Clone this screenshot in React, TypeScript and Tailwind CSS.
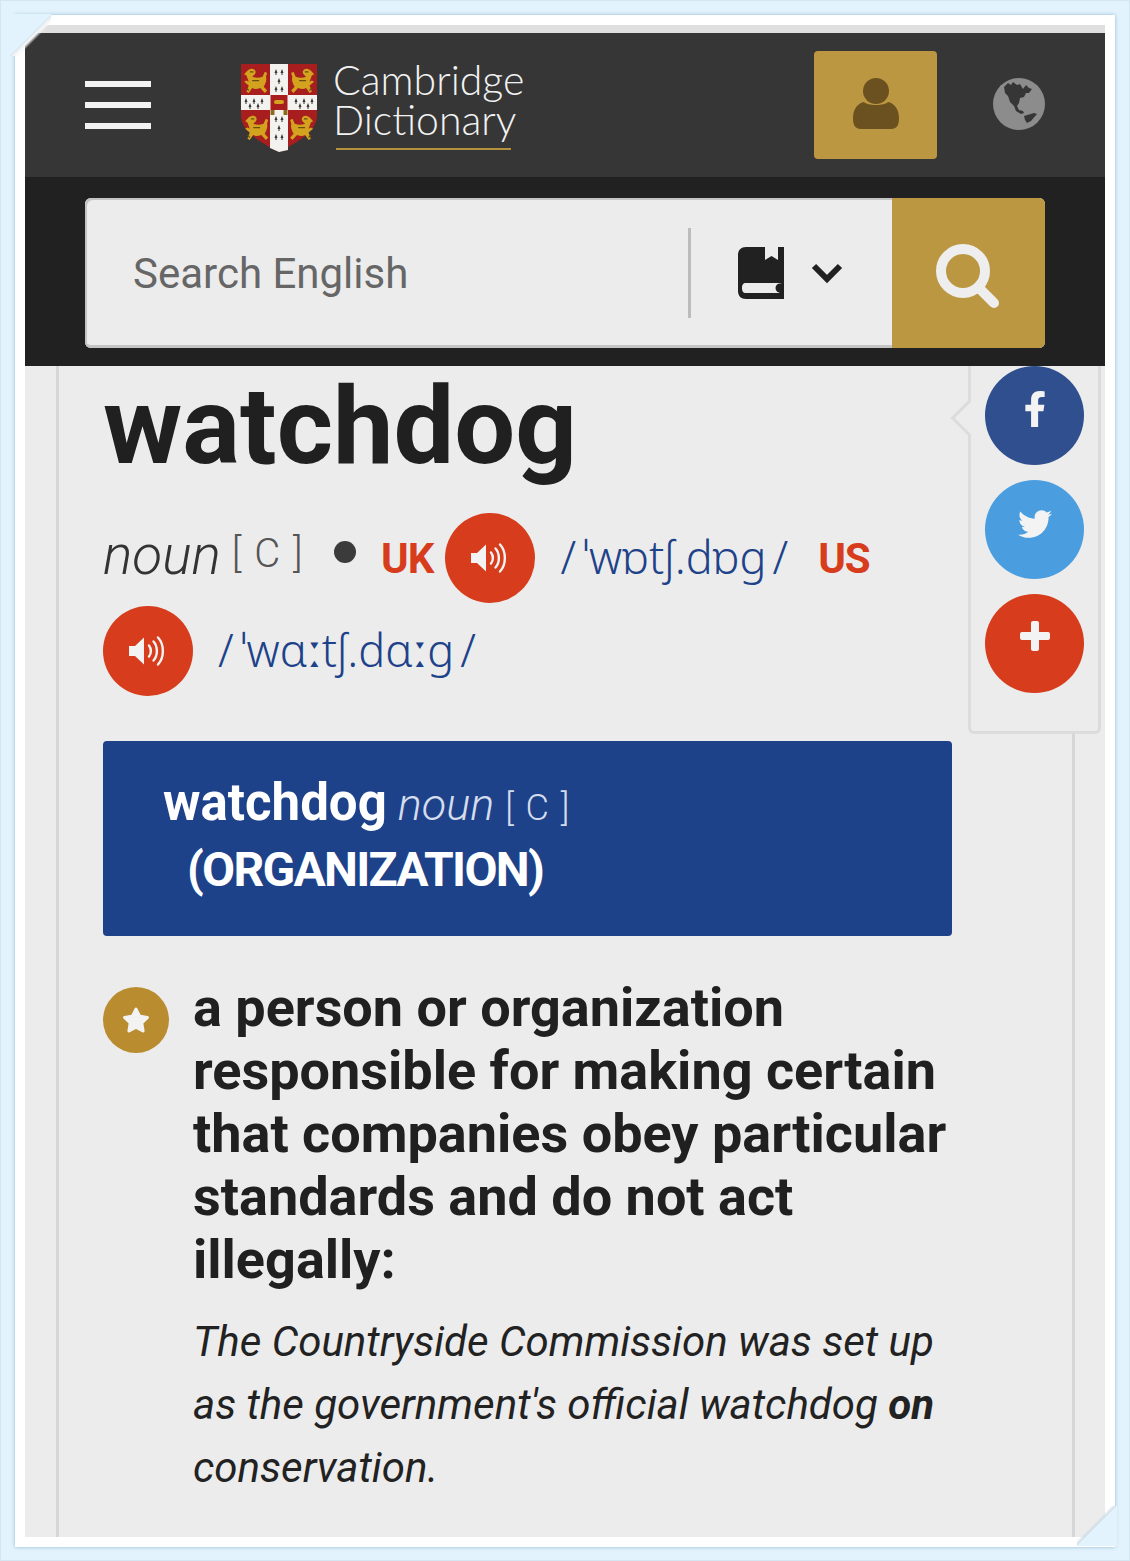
import { FaFacebookF, FaTwitter, FaStar } from "react-icons/fa";

const roboto = "font-['Roboto',sans-serif]";

function Speaker() {
  return (
    <svg width="38" height="32" viewBox="0 0 38 32" fill="none">
      <path d="M0 11h6L15 2.5v27L6 21H0z" fill="#f3f3f3" />
      <path d="M20 10.5c2.5 3 2.5 8 0 11" stroke="#f3f3f3" strokeWidth="2.4" strokeLinecap="round" />
      <path d="M24.5 6.5c4.5 5 4.5 14 0 19" stroke="#f3f3f3" strokeWidth="2.4" strokeLinecap="round" />
      <path d="M29 2.5c6.5 7 6.5 20 0 27" stroke="#f3f3f3" strokeWidth="2.4" strokeLinecap="round" />
    </svg>
  );
}

function SoundButton() {
  return (
    <span className="flex h-[90px] w-[90px] shrink-0 items-center justify-center rounded-full bg-[#d73d1c]">
      <Speaker />
    </span>
  );
}

function Lion({ flip, x, y }: { flip?: boolean; x: number; y: number }) {
  return (
    <g transform={`translate(${x} ${y}) ${flip ? "scale(-1.15 1.25) translate(-22 0)" : "scale(1.15 1.25)"}`}>
      <path
        d="M4 2c3-2 6-2 7 1 0 2-2 3-3 4 3 1 6 1 9 0l2-4 2 1-1 3c1 3-1 6-2 8l3 3-2 2-4-4c-3 1-5 1-7 0l-3 4-2-1 2-5-4-3 2-1 2 1-2-5-2-1z"
        fill="#d3a21f"
      />
      <path d="M6 3h3M8 10h6M3 16l2 2" stroke="#6b4d10" strokeWidth="1" />
    </g>
  );
}

function Ermine({ x, y }: { x: number; y: number }) {
  return <path d={`M${x} ${y}l1.5 4h-3zM${x - 0.5} ${y + 4}h1v2h-1z`} fill="#333" />;
}

function Shield() {
  return (
    <svg width="76" height="88" viewBox="0 0 76 88" className="shrink-0">
      <path d="M0 0H76V52C76 68 55 79 38 88 21 79 0 68 0 52Z" fill="#a81e1e" />
      <path d="M29 0H47V31H76V46H47V86L38 88 29 84V46H0V31H29Z" fill="#f4f2ee" />
      <Lion x={2} y={4} />
      <Lion x={49} y={4} flip />
      <Lion x={3} y={51} />
      <Lion x={48} y={51} flip />
      <Ermine x={35} y={5} />
      <Ermine x={41} y={5} />
      <Ermine x={38} y={14} />
      <Ermine x={35} y={22} />
      <Ermine x={41} y={22} />
      <Ermine x={35} y={52} />
      <Ermine x={41} y={52} />
      <Ermine x={38} y={61} />
      <Ermine x={35} y={70} />
      <Ermine x={41} y={70} />
      <Ermine x={5} y={34} />
      <Ermine x={13} y={34} />
      <Ermine x={21} y={34} />
      <Ermine x={9} y={39} />
      <Ermine x={17} y={39} />
      <Ermine x={55} y={34} />
      <Ermine x={63} y={34} />
      <Ermine x={71} y={34} />
      <Ermine x={59} y={39} />
      <Ermine x={67} y={39} />
      <rect x="29.5" y="31" width="17" height="15" fill="#a81e1e" />
      <rect x="33" y="36" width="10" height="4" rx="2" fill="#d3a21f" />
      <rect x="29.5" y="46" width="4" height="5" fill="#8a6a1f" />
      <rect x="42.5" y="46" width="4" height="5" fill="#8a6a1f" />
    </svg>
  );
}

function Globe() {
  return (
    <svg width="52" height="52" viewBox="0 0 52 52" className="shrink-0">
      <circle cx="26" cy="26" r="26" fill="#8c8c8c" />
      <path
        d="M11 9l4-4 3 2 2-3 4 3 3-1 3 5 3-4 3 3 3 1-3 4-3 0-2 4-4 1-1 5-2 3 2 4 4 1 1 2-3 1-5-3-2-5-4-4-2-6-3-3z"
        fill="#363636"
      />
      <path d="M31 38l10-3 3 1-6 7-4 2-2-3z" fill="#363636" />
    </svg>
  );
}

function Person() {
  return (
    <svg width="48" height="52" viewBox="0 0 48 52">
      <circle cx="24" cy="13" r="13" fill="#6b5120" />
      <path
        d="M12 24c3 4 21 4 24 0 6 1 11 7 11 16 0 7-2 11-8 11H9c-6 0-8-4-8-11 0-9 5-15 11-16z"
        fill="#6b5120"
      />
    </svg>
  );
}

function Book() {
  return (
    <svg width="46" height="52" viewBox="0 0 46 52">
      <path
        d="M8 0H27V13L33.5 9 40 13V0H46V52H8C3 52 0 49 0 44V8C0 3 3 0 8 0Z"
        fill="#212121"
      />
      <path
        d="M8 36H44C40 37 38 39 38 41 38 43 40 45 42 46H8C5 46 4 44 4 41 4 38 5 36 8 36Z"
        fill="#ececec"
      />
      <circle cx="42" cy="41" r="4.5" fill="#212121" />
    </svg>
  );
}

function SearchIcon() {
  return (
    <svg width="64" height="64" viewBox="0 0 64 64" fill="none">
      <circle cx="28" cy="27" r="22" stroke="#eeeeee" strokeWidth="10" />
      <path d="M44 44L59 59" stroke="#eeeeee" strokeWidth="10" strokeLinecap="round" />
    </svg>
  );
}

function Grammar({ className }: { className: string }) {
  return <span className={`font-light tracking-[1.5px] ${className}`}>[ C ]</span>;
}

function Ipa({ text }: { text: string }) {
  return (
    <span className="mb-[3px] ml-[25px] font-['Noto_Sans',sans-serif] text-[45px] font-light text-[#1d428a]">
      <span className="mr-[7px]">/</span>
      {text}
      <span className="ml-[6px]">/</span>
    </span>
  );
}

function ShareCircle({ color, children }: { color: string; children: React.ReactNode }) {
  return (
    <span className={`flex h-[99px] w-[99px] items-center justify-center rounded-full ${color}`}>{children}</span>
  );
}

export default function App() {
  return (
    <div className="relative flex h-[1561px] w-[1130px] overflow-hidden border border-[#d3e6f1] bg-[#e3f3fd] pb-[13px] pl-[14px] pr-[14px] pt-[14px]">
      <div className="flex min-w-0 flex-1 bg-white p-[10px] shadow-[0_0_4px_#8fb6d0]">
        <div className={`flex min-w-0 flex-1 flex-col overflow-hidden bg-[#ececec] ${roboto}`}>
          <div className="h-2 shrink-0 bg-[#dfdfdf]" />
          <header className="flex h-[144px] shrink-0 items-center bg-[#363636] pl-[60px] pr-[60px]">
            <div className="flex w-[66px] flex-col gap-[15px]">
              <span className="h-[6px] bg-[#f2f2f2]" />
              <span className="h-[6px] bg-[#f2f2f2]" />
              <span className="h-[6px] bg-[#f2f2f2]" />
            </div>
            <div className="ml-[90px] flex items-center gap-[16px] pt-[6px]">
              <Shield />
              <div className="mb-[7px] font-['Lato',sans-serif] text-[41px] font-light leading-[40px] text-[#f2f2f2]">
                <div>Cambridge</div>
                <div>Dictionary</div>
                <div className="ml-[3px] mt-[8px] h-[2px] w-[175px] bg-[#b4913f]" />
              </div>
            </div>
            <div className="ml-auto flex h-[108px] w-[123px] items-center justify-center rounded-[4px] bg-[#bc9742] pb-[2px]">
              <Person />
            </div>
            <div className="ml-[56px] pb-[3px]">
              <Globe />
            </div>
          </header>
          <div className="h-[189px] shrink-0 bg-[#212121] px-[60px] pt-[21px]">
            <div className="flex h-[150px] overflow-hidden rounded-[6px] bg-[#ececec] shadow-[inset_2px_2px_0_#c4c4c4,inset_0_-3px_0_#c4c4c4]">
              <div className="flex flex-1 items-center pl-[48px] text-[42px] text-[#666666]">Search English</div>
              <div className="flex w-[204px] items-center">
                <span className="h-[90px] w-[3px] bg-[#bcbcbc]" />
                <span className="ml-[47px]">
                  <Book />
                </span>
                <svg width="32" height="22" viewBox="0 0 32 22" fill="none" className="ml-[27px]">
                  <path d="M3 4L16 17L29 4" stroke="#212121" strokeWidth="6" />
                </svg>
              </div>
              <div className="flex w-[153px] items-center justify-center bg-[#bc9742] pr-[3px] pt-[5px]">
                <SearchIcon />
              </div>
            </div>
          </div>
          <main className="relative min-h-0 flex-1">
            <div className="ml-[31px] mr-[30px] h-full border-x-[3px] border-[#d6d6d6] pl-[44px] pr-[120px] text-[#202020]">
              <h1 className="pt-[1px] text-[108px] font-bold leading-[119px]">watchdog</h1>
              <div className="mt-[27px] flex flex-wrap items-center gap-y-[3px]">
                <span className="mb-[5px] text-[55px] font-light italic text-[#333333]">noun</span>
                <Grammar className="mb-[9px] ml-[11px] text-[40px] text-[#555555]" />
                <span className="mb-[12px] ml-[30px] h-[22px] w-[22px] rounded-full bg-[#3b3b3b]" />
                <span className="ml-[25px] mr-[12px] text-[42px] font-bold tracking-[-1px] text-[#d73d1c]">UK</span>
                <SoundButton />
                <Ipa text="ˈwɒtʃ.dɒɡ" />
                <span className="ml-[30px] text-[42px] font-bold tracking-[-1px] text-[#d73d1c]">US</span>
                <SoundButton />
                <Ipa text="ˈwɑːtʃ.dɑːɡ" />
              </div>
              <section className="mt-[45px] h-[195px] rounded-[4px] bg-[#1d428a] pl-[60px] pt-[31px] leading-[62px] text-white">
                <div className="flex items-baseline">
                  <span className="text-[51px] font-bold">watchdog</span>
                  <span className="ml-[11px] text-[45px] font-light italic text-[#d5dcec]">noun</span>
                  <Grammar className="ml-[11px] text-[36px] text-[#d5dcec]" />
                </div>
                <div className="pl-[24px] text-[48px] font-bold tracking-[-1.7px]">(ORGANIZATION)</div>
              </section>
              <section className="mt-[40px] flex">
                <span className="mt-[11px] flex h-[66px] w-[66px] shrink-0 items-center justify-center rounded-full bg-[#b98c2f] pb-[1px]">
                  <FaStar className="text-[28px] text-[#f3f3f3]" />
                </span>
                <div className="ml-[24px] min-w-0 flex-1">
                  <p className="text-[54px] font-bold leading-[63px] text-[#202020]">
                    a person or organization responsible for making certain that companies obey particular standards
                    and do not act illegally:
                  </p>
                  <p className="mt-[19px] text-[42px] font-normal italic leading-[63px] text-[#222222]">
                    The Countryside Commission was set up as the government's official watchdog{" "}
                    <b className="font-bold">on</b> conservation.
                  </p>
                </div>
              </section>
            </div>
            <aside className="absolute left-[943px] top-0 flex h-[368px] w-[133px] flex-col gap-[15px] rounded-b-[6px] border-x-[3px] border-b-[3px] border-[#dcdcdc] bg-[#ececec] pl-[14px]">
              <span className="absolute -left-[15px] top-[39px] h-[26px] w-[26px] rotate-45 border-b-[3px] border-l-[3px] border-[#dcdcdc] bg-[#ececec]" />
              <span className="relative">
                <ShareCircle color="bg-[#2f4f8f]">
                  <FaFacebookF className="mb-[14px] text-[36px] text-[#f3f3f3]" />
                </ShareCircle>
              </span>
              <ShareCircle color="bg-[#4a9ee0]">
                <FaTwitter className="mb-[12px] text-[34px] text-[#f3f3f3]" />
              </ShareCircle>
              <ShareCircle color="bg-[#d73d1c]">
                <svg width="30" height="30" viewBox="0 0 30 30" className="mb-[16px]">
                  <path d="M11 2a2 2 0 012-2h4a2 2 0 012 2v9h9a2 2 0 012 2v4a2 2 0 01-2 2h-9v9a2 2 0 01-2 2h-4a2 2 0 01-2-2v-9H2a2 2 0 01-2-2v-4a2 2 0 012-2h9z" fill="#f3f3f3" />
                </svg>
              </ShareCircle>
            </aside>
          </main>
        </div>
      </div>
      <span className="absolute left-[8px] top-[13px] h-[42px] w-[42px] bg-[linear-gradient(135deg,#e3f3fd_50%,#d9e6ee_51%,#f7f7f7_56%,transparent_62%)]" />
      <span className="absolute bottom-[14px] right-[12px] h-[40px] w-[40px] bg-[linear-gradient(135deg,transparent_42%,#cfdde6_49%,#e3f3fd_50%)]" />
    </div>
  );
}
